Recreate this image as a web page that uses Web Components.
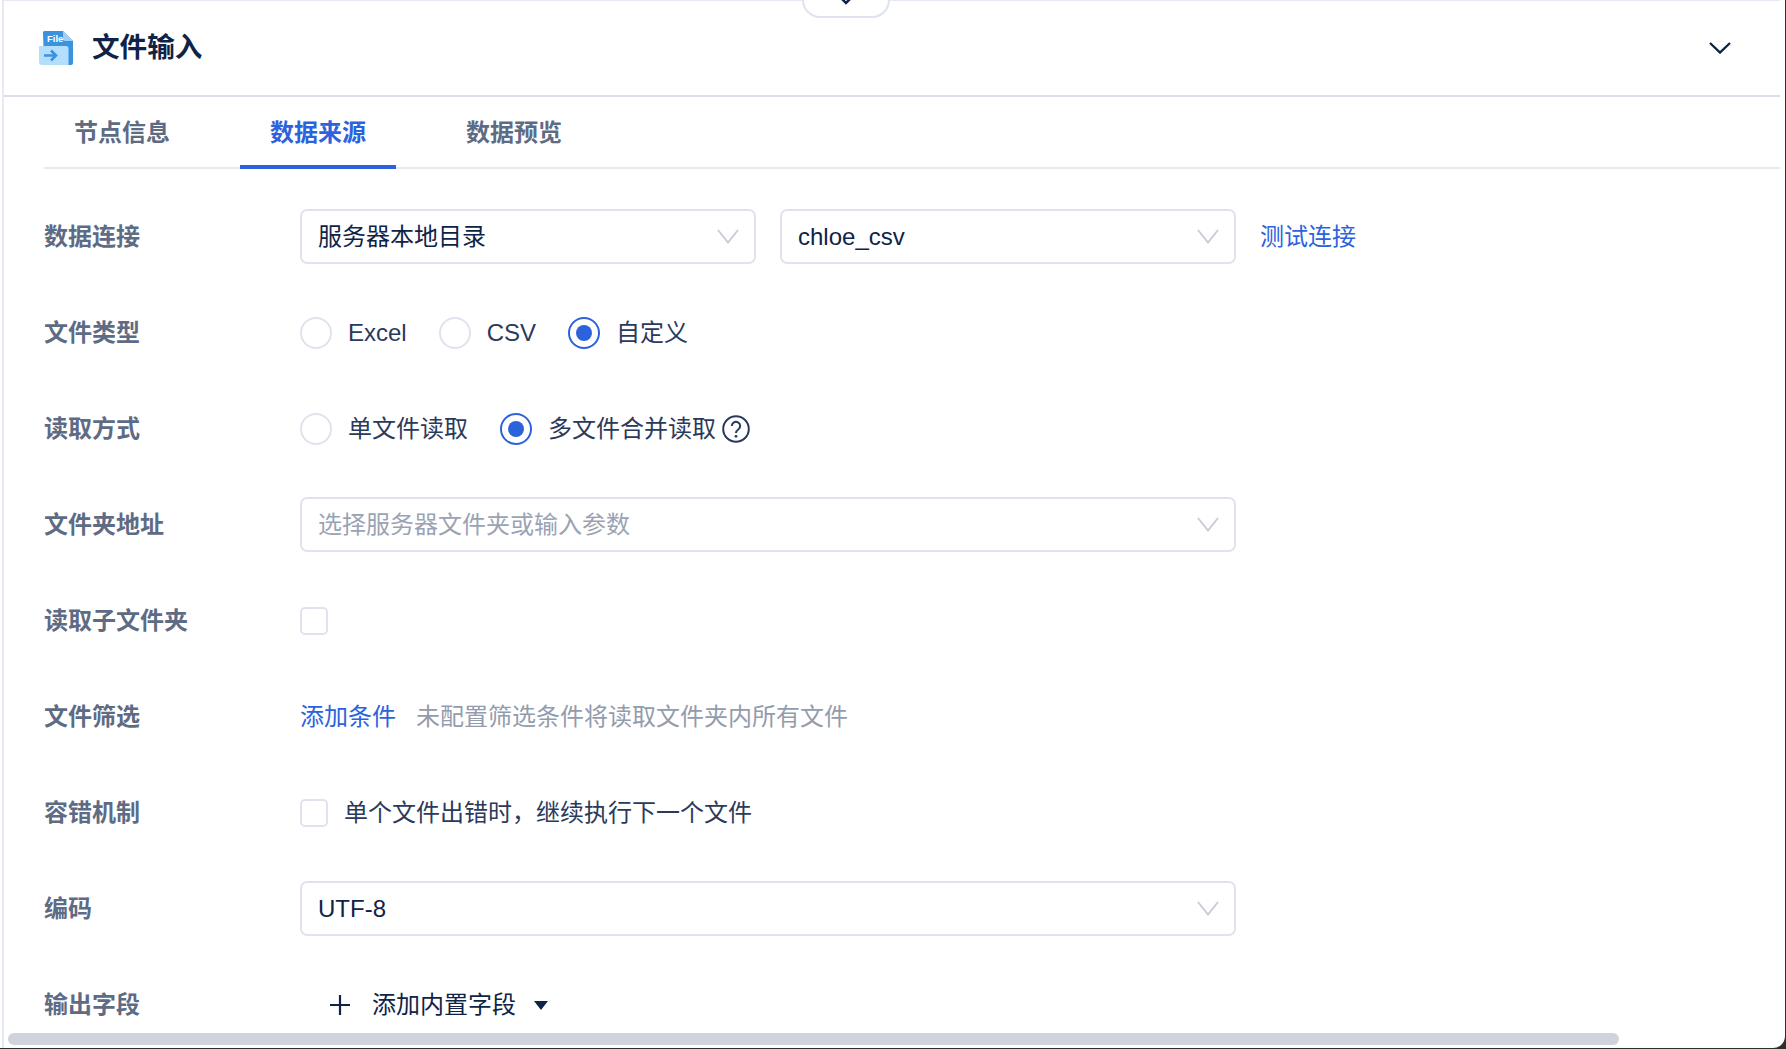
<!DOCTYPE html>
<html lang="zh">
<head>
<meta charset="utf-8">
<title>文件输入</title>
<style>
html,body{margin:0;height:100%;overflow:hidden;background:#2c302d;}
body{font-family:"Liberation Sans","Noto Sans CJK SC",sans-serif;font-size:24px;line-height:32px;color:#0f2347;}
</style>
</head>
<body>
<app-window>
  <panel-header title-text="文件输入"></panel-header>
  <tab-bar>
    <tab-item>节点信息</tab-item>
    <tab-item active>数据来源</tab-item>
    <tab-item>数据预览</tab-item>
  </tab-bar>
  <form-body>
    <form-row label="数据连接">
      <select-box width="456" value="服务器本地目录"></select-box>
      <select-box width="456" value="chloe_csv" style="margin-left:24px"></select-box>
      <text-link style="margin-left:24px">测试连接</text-link>
    </form-row>
    <form-row label="文件类型">
      <radio-opt>Excel</radio-opt>
      <radio-opt style="margin-left:32px">CSV</radio-opt>
      <radio-opt checked style="margin-left:32px">自定义</radio-opt>
    </form-row>
    <form-row label="读取方式">
      <radio-opt>单文件读取</radio-opt>
      <radio-opt checked style="margin-left:32px">多文件合并读取</radio-opt>
      <help-icon></help-icon>
    </form-row>
    <form-row label="文件夹地址">
      <select-box width="936" placeholder="选择服务器文件夹或输入参数"></select-box>
    </form-row>
    <form-row label="读取子文件夹">
      <check-box></check-box>
    </form-row>
    <form-row label="文件筛选">
      <text-link>添加条件</text-link>
      <hint-text>未配置筛选条件将读取文件夹内所有文件</hint-text>
    </form-row>
    <form-row label="容错机制">
      <check-box>单个文件出错时，继续执行下一个文件</check-box>
    </form-row>
    <form-row label="编码">
      <select-box width="936" value="UTF-8"></select-box>
    </form-row>
    <form-row label="输出字段">
      <add-button>添加内置字段</add-button>
    </form-row>
  </form-body>
</app-window>
<script>
function define(name, css, html, setup){
  customElements.define(name, class extends HTMLElement{
    constructor(){
      super();
      const root=this.attachShadow({mode:'open'});
      root.innerHTML='<style>'+css+'</style>'+(typeof html==='function'?html(this):html);
    }
    connectedCallback(){
      const root=this.shadowRoot;
      if(setup) setup(this,root);
    }
  });
}
const attr=(el,n)=>el.getAttribute(n)||'';

define('app-window',`
  :host{display:block;position:relative;height:1048px;box-sizing:border-box;background:#fff;padding:0 5px 0 2px;border-bottom-right-radius:12px;margin-right:1px;overflow:hidden;}
  .panel{height:100%;box-sizing:border-box;border-left:2px solid #e6e9f2;border-top:1px solid #e6e9f2;overflow:hidden;}
  .handle{position:absolute;left:802px;top:-2px;width:88px;height:20px;box-sizing:border-box;background:#fff;border:2px solid #dfe3ee;border-radius:0 0 18px 18px;}
  .handle svg{position:absolute;left:34px;top:-6px;}
  .bar{position:absolute;left:8px;top:1033px;width:1611px;height:12px;border-radius:6px;background:#d0d3db;}
`,`<div class="panel"><slot></slot></div>
<div class="handle"><svg width="16" height="12" viewBox="0 0 16 12"><path d="M3 4 L8 9 L13 4" fill="none" stroke="#0f2347" stroke-width="2.5"/></svg></div>
<div class="bar"></div>`);

define('panel-header',`
  :host{display:flex;align-items:center;height:96px;box-sizing:border-box;border-bottom:2px solid #dcdfe8;padding:0 49px 0 34px;}
  svg.logo{flex:none;width:36px;height:36px;}
  h1{margin:0 0 0 18px;font-size:27.6px;line-height:40px;font-weight:700;color:#0f2347;flex:1;}
`,el=>`<svg class="logo" viewBox="0 0 36 36">
  <path d="M5 2.5a1.5 1.5 0 0 1 1.5-1.5H25l10 10v22a2 2 0 0 1-2 2H6z" fill="#3b93e0"/>
  <path d="M25 1l10 10h-8a2 2 0 0 1-2-2z" fill="#9fd0f7"/>
  <path d="M1.5 16H28a2.5 2.5 0 0 1 2.500 2.500V35H4a3 3 0 0 1-3-3V16.500z" fill="#b4dffc"/>
  <path d="M6 25.500h11M13 20.500l5 5-5 5" fill="none" stroke="#3b93e0" stroke-width="2.600"/>
  <text x="9" y="12" font-family="Liberation Sans" font-size="9.500" font-weight="700" fill="#fff">File</text>
</svg><h1>${attr(el,'title-text')}</h1>
<svg width="22" height="12" viewBox="0 0 22 12"><path d="M1 1 L11 10.500 L21 1" fill="none" stroke="#0f2347" stroke-width="2.400"/></svg>`);

define('tab-bar',`
  :host{display:flex;gap:40px;height:72px;box-sizing:border-box;margin-left:40px;border-bottom:2px solid #e6e9ef;}
`,`<slot></slot>`);

define('tab-item',`
  :host{display:block;box-sizing:border-box;height:72px;padding:0 30px;line-height:72px;font-size:24px;font-weight:700;color:#5e6b84;}
  :host([active]){color:#2c62dc;border-bottom:4px solid #2c62dc;}
`,`<slot></slot>`);

define('form-body',`
  :host{display:block;padding:20px 0 0 40px;}
`,`<slot></slot>`);

define('form-row',`
  :host{display:flex;align-items:center;height:96px;}
  .label{flex:none;width:256px;font-size:24px;font-weight:700;color:#5e6b84;}
  .ctl{display:flex;align-items:center;}
`,el=>`<div class="label">${attr(el,'label')}</div><div class="ctl"><slot></slot></div>`);

define('select-box',`
  :host{display:flex;align-items:center;box-sizing:border-box;height:55px;margin-top:-1px;border:2px solid #dfe3ee;border-radius:7px;padding:0 15px 0 16px;background:#fff;}
  .v{flex:1;color:#0f2347;white-space:nowrap;}
  .p{flex:1;color:#9aa3b3;white-space:nowrap;}
  svg{flex:none;}
`,el=>{
  const val=attr(el,'value');
  return (val?`<span class="v">${val}</span>`:`<span class="p">${attr(el,'placeholder')}</span>`)+
  `<svg width="22" height="15" viewBox="0 0 22 15"><path d="M1 1 L11 13.500 L21 1" fill="none" stroke="#c8ced8" stroke-width="2"/></svg>`;
},el=>{el.style.width=attr(el,'width')+'px';});

define('text-link',`
  :host{display:inline-block;color:#2c62dc;white-space:nowrap;}
`,`<slot></slot>`);

define('hint-text',`
  :host{display:inline-block;color:#929cad;margin-left:20px;white-space:nowrap;}
`,`<slot></slot>`);

define('radio-opt',`
  :host{display:inline-flex;align-items:center;color:#2a3a5c;white-space:nowrap;}
  .o{flex:none;box-sizing:border-box;width:32px;height:32px;border:2px solid #dfe3ee;border-radius:50%;margin-right:16px;display:flex;align-items:center;justify-content:center;}
  :host([checked]) .o{border-color:#2c62dc;}
  :host([checked]) .o::after{content:"";width:16px;height:16px;border-radius:50%;background:#2c62dc;}
`,`<span class="o"></span><slot></slot>`);

define('check-box',`
  :host{display:inline-flex;align-items:center;color:#2a3a5c;white-space:nowrap;}
  .b{flex:none;box-sizing:border-box;width:28px;height:28px;border:2px solid #dfe3ee;border-radius:5px;}
  slot{display:block;margin-left:16px;}
`,`<span class="b"></span><slot></slot>`);

define('help-icon',`
  :host{display:inline-flex;margin-left:6px;}
`,`<svg width="28" height="28" viewBox="0 0 28 28"><circle cx="14" cy="14" r="12.800" fill="none" stroke="#2a3a5c" stroke-width="2"/><path d="M9.800 11a4.200 4.200 0 1 1 6.500 3.500c-1.500 1-2.300 1.700-2.300 3.500" fill="none" stroke="#2a3a5c" stroke-width="2"/><circle cx="14" cy="21.300" r="1.400" fill="#2a3a5c"/></svg>`);

define('add-button',`
  :host{display:inline-flex;align-items:center;padding-left:30px;color:#0f2347;white-space:nowrap;}
  svg.p{margin-right:22px;}
  svg.t{margin-left:18px;}
`,`<svg class="p" width="20" height="20" viewBox="0 0 20 20"><path d="M10 0V20M0 10H20" stroke="#0f2347" stroke-width="2.200"/></svg><slot></slot><svg class="t" width="14" height="9" viewBox="0 0 14 9"><path d="M0 0H14L7 9z" fill="#0f2347"/></svg>`);
</script>
</body>
</html>
